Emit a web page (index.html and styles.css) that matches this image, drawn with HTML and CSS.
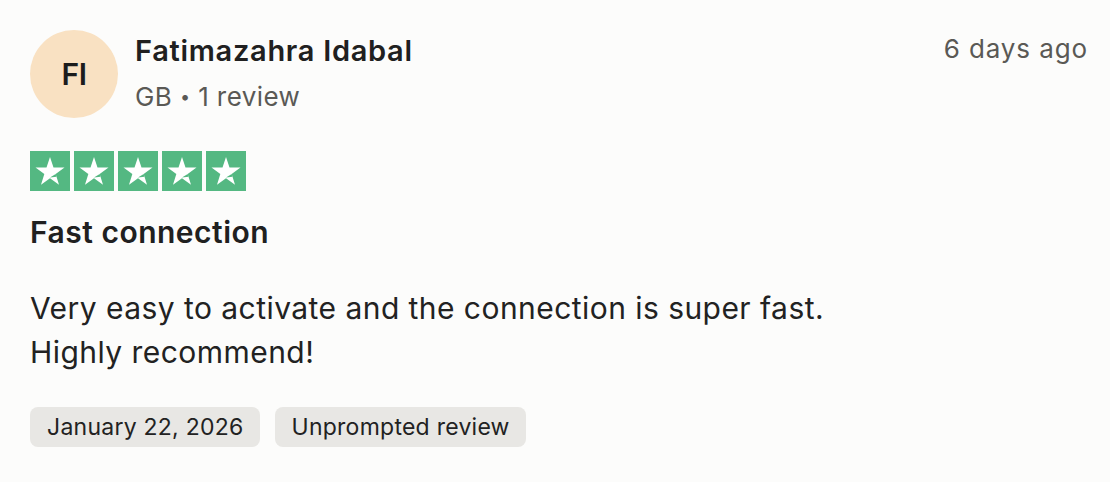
FILE: index.html
```html
<!DOCTYPE html>
<html lang="en">
<head>
<meta charset="utf-8">
<link rel="stylesheet" href="styles.css">
</head>
<body>
<article class="review">
  <header class="head">
    <div class="avatar">FI</div>
    <div class="who">
      <div class="name">Fatimazahra Idabal</div>
      <div class="meta">GB <span class="dot">•</span> 1 review</div>
    </div>
    <div class="when">6 days ago</div>
  </header>
  <div class="stars">
    <span class="star"><svg viewBox="0 0 24 24"><path d="M12 3.6l2.1 6.3h6.6l-5.3 3.9 2 6.4-5.4-3.9-5.4 3.9 2-6.4-5.3-3.9h6.6z" fill="#fff"/><path d="M15.4 13.8l.5 1.6-3.9.5z" fill="#54b882"/></svg></span>
    <span class="star"><svg viewBox="0 0 24 24"><path d="M12 3.6l2.1 6.3h6.6l-5.3 3.9 2 6.4-5.4-3.9-5.4 3.9 2-6.4-5.3-3.9h6.6z" fill="#fff"/><path d="M15.4 13.8l.5 1.6-3.9.5z" fill="#54b882"/></svg></span>
    <span class="star"><svg viewBox="0 0 24 24"><path d="M12 3.6l2.1 6.3h6.6l-5.3 3.9 2 6.4-5.4-3.9-5.4 3.9 2-6.4-5.3-3.9h6.6z" fill="#fff"/><path d="M15.4 13.8l.5 1.6-3.9.5z" fill="#54b882"/></svg></span>
    <span class="star"><svg viewBox="0 0 24 24"><path d="M12 3.6l2.1 6.3h6.6l-5.3 3.9 2 6.4-5.4-3.9-5.4 3.9 2-6.4-5.3-3.9h6.6z" fill="#fff"/><path d="M15.4 13.8l.5 1.6-3.9.5z" fill="#54b882"/></svg></span>
    <span class="star"><svg viewBox="0 0 24 24"><path d="M12 3.6l2.1 6.3h6.6l-5.3 3.9 2 6.4-5.4-3.9-5.4 3.9 2-6.4-5.3-3.9h6.6z" fill="#fff"/><path d="M15.4 13.8l.5 1.6-3.9.5z" fill="#54b882"/></svg></span>
  </div>
  <h2 class="title">Fast connection</h2>
  <p class="body">Very easy to activate and the connection is super fast.<br>Highly recommend!</p>
  <div class="tags">
    <span class="tag">January 22, 2026</span>
    <span class="tag">Unprompted review</span>
  </div>
</article>
</body>
</html>
```
FILE: styles.css
```css
html, body { margin: 0; padding: 0; background: #fcfcfb; }
body { font-family: Inter, "Liberation Sans", sans-serif; color: #222; }
.review { padding: 30px 22px 0 30px; }
.head { display: flex; align-items: flex-start; }
.avatar {
  width: 88px; height: 88px; border-radius: 50%;
  background: #f9e1c2; color: #1c1c1c;
  display: flex; align-items: center; justify-content: center;
  font-size: 30px; font-weight: 600; letter-spacing: -0.5px;
  flex: none;
}
.who { margin-left: 17px; flex: 1; padding-top: 4px; }
.name { font-size: 29px; font-weight: 600; line-height: 34px; letter-spacing: 0.7px; color: #202020; }
.meta { font-size: 26px; line-height: 34px; margin-top: 12px; color: #5a5955; letter-spacing: 0.4px; }
.dot { font-size: 18px; vertical-align: 3px; }
.when { font-size: 26px; line-height: 34px; padding-top: 2px; color: #5a5955; letter-spacing: 0.9px; }
.stars { display: flex; gap: 4px; margin-top: 33px; }
.star { width: 40px; height: 40px; background: #54b882; display: flex; }
.star svg { width: 40px; height: 40px; }
.title { font-size: 30px; font-weight: 600; margin: 21px 0 0; line-height: 40px; letter-spacing: 0.5px; color: #202020; }
.body { font-size: 30px; line-height: 44px; margin: 34px 0 0; letter-spacing: 0.45px; color: #222; }
.tags { display: flex; gap: 15px; margin-top: 33px; }
.tag { background: #e8e7e4; border-radius: 8px; padding: 0 16px 0 17px; height: 40px; line-height: 40px; font-size: 23px; color: #222; letter-spacing: 0.25px; }
```
